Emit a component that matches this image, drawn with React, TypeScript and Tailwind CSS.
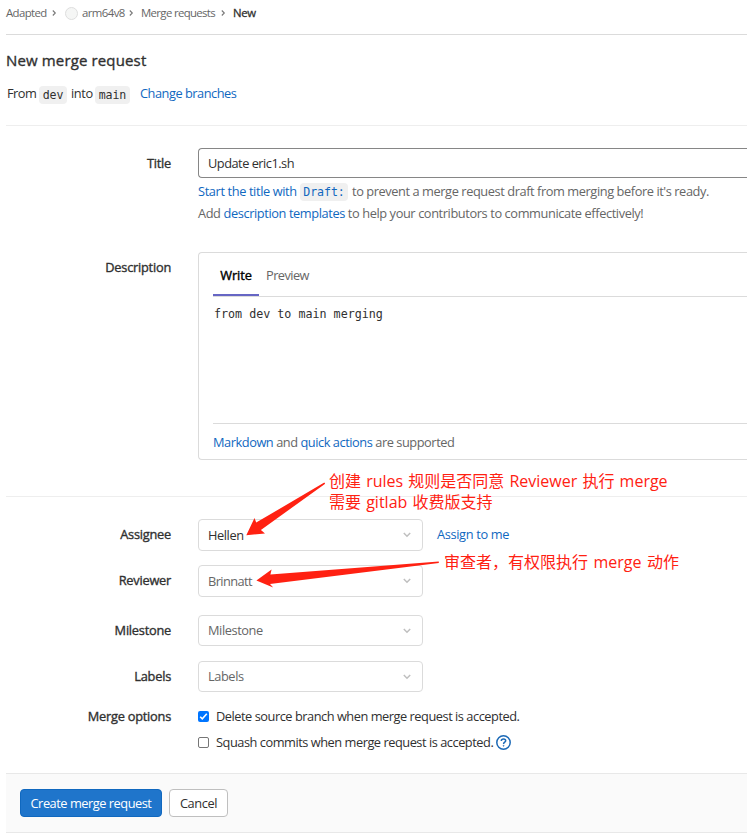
import React from "react";

const link = "text-[#1068bf]";

function Chevron() {
  return (
    <svg width="8" height="6" viewBox="0 0 8 6" fill="none" className="mr-[11px] shrink-0">
      <path d="M0.8 1L4 4.2L7.2 1" stroke="#bfbfbf" strokeWidth="1.5" />
    </svg>
  );
}

function Crumb() {
  return (
    <svg width="5" height="8" viewBox="0 0 5 8" fill="none" className="shrink-0">
      <path d="M0.8 1.5L3.3 4L0.8 6.5" stroke="#777" strokeWidth="1.1" />
    </svg>
  );
}

function Code({ children, className = "" }: { children: React.ReactNode; className?: string }) {
  return (
    <code
      className={`flex h-[18px] shrink-0 items-center justify-center rounded-[4px] bg-[#f0f0f0] font-['DejaVu_Sans_Mono',monospace] text-[11.6px] tracking-[-0.1px] ${className}`}
    >
      {children}
    </code>
  );
}

function Label({ children, className = "" }: { children: React.ReactNode; className?: string }) {
  return (
    <div
      className={`w-[171px] shrink-0 text-right tracking-[-0.24px] [-webkit-text-stroke:0.35px_#303030] ${className}`}
    >
      {children}
    </div>
  );
}

function Select({ children, className = "" }: { children: React.ReactNode; className?: string }) {
  return (
    <div
      className={`ml-[27px] flex w-[225px] shrink-0 items-center justify-between rounded-[4px] border border-[#dbdbdb] bg-white pl-[9px] ${className}`}
    >
      <span className="-mt-px">{children}</span>
      <Chevron />
    </div>
  );
}

export default function App() {
  return (
    <div className="relative h-[837px] w-[747px] overflow-hidden bg-white font-['Open_Sans','Noto_Sans_CJK_SC',sans-serif] text-[12.8px] leading-[20px] tracking-[-0.42px] whitespace-nowrap text-[#303030]">
      <nav className="ml-[6px] flex h-[35px] items-start border-b border-[#dbdbdb] pt-[3px] text-[11.4px] tracking-[-0.58px] text-[#666]">
        <div className="flex h-[20px] items-center">
          <span className="w-[46px] tracking-[-0.6px]">Adapted</span>
          <Crumb />
          <span className="ml-[8px] h-[13px] w-[13px] rounded-full border border-[#dedede] bg-[#f5f6f5]" />
          <span className="ml-[4px] w-[47px]">arm64v8</span>
          <Crumb />
          <span className="ml-[7px] w-[80px] tracking-[-0.65px]">Merge requests</span>
          <Crumb />
          <span className="ml-[7px] tracking-[-0.3px] text-[#303030] [-webkit-text-stroke:0.3px_#303030]">New</span>
        </div>
      </nav>

      <header className="ml-[6px] h-[91px] border-b border-[#eee] pt-[13px]">
        <h1 className="h-[24px] text-[15px] leading-[24px] tracking-[0.14px] [-webkit-text-stroke:0.35px_#303030]">
          New merge request
        </h1>
        <div className="mt-[11px] flex h-[20px] items-center">
          <span className="w-[33px] pl-px tracking-[-0.5px]">From</span>
          <Code className="mt-[4px] w-[28px]">dev</Code>
          <span className="ml-[4px] w-[24px] tracking-[-0.4px]">into</span>
          <Code className="mt-[4px] w-[35px]">main</Code>
          <a className={`ml-[10px] tracking-[-0.48px] ${link}`}>Change branches</a>
        </div>
      </header>

      <section className="mt-[22px] flex">
        <div className="flex h-[30px] items-center">
          <Label>Title</Label>
        </div>
        <div className="ml-[27px] grow">
          <div className="flex h-[30px] items-center rounded-l-[4px] border border-r-0 border-[#868686] pl-[9px] tracking-[-0.5px]">
            Update eric1.sh
          </div>
          <p className="mt-[2px] flex h-[22px] items-center text-[#666]">
            <span className={`w-[102px] tracking-[-0.38px] ${link}`}>Start the title with</span>
            <Code className={`mt-[2px] w-[48px] ${link}`}>Draft:</Code>
            <span className="ml-[4px]">to prevent a merge request draft from merging before it's ready.</span>
          </p>
          <p className="flex h-[22px] items-center tracking-[-0.4px] text-[#666]">
            <span>
              Add <a className={link}>description templates</a> to help your contributors to communicate effectively!
            </span>
          </p>
        </div>
      </section>

      <section className="mt-[28px] flex">
        <div className="flex h-[30px] items-center">
          <Label>Description</Label>
        </div>
        <div className="ml-[27px] h-[208px] grow rounded-l-[4px] border border-r-0 border-[#dbdbdb] pl-[14px]">
          <div className="flex h-[44px] border-b border-[#dbdbdb]">
            <div className="flex h-[43px] w-[46px] items-center justify-center border-b-2 border-[#6666c4] pt-[3px] tracking-[-0.1px] text-black [-webkit-text-stroke:0.4px_#000]">
              Write
            </div>
            <div className="ml-[7px] flex h-[43px] items-center pt-px tracking-[-0.55px] text-[#666]">Preview</div>
          </div>
          <div className="h-[127px] border-b border-[#dbdbdb] pt-[7px] pl-[1px] font-['DejaVu_Sans_Mono',monospace] text-[11.7px] tracking-normal">
            from dev to main merging
          </div>
          <p className="flex h-[36px] items-center tracking-[-0.45px] text-[#666]">
            <span>
              <a className={link}>Markdown</a> and <a className={link}>quick actions</a> are supported
            </span>
          </p>
        </div>
      </section>

      <section className="mt-[36px] ml-[6px] border-t border-[#eee] pt-[22px]">
        <div className="-ml-[6px] flex items-center">
          <Label className="-mt-[2px]">Assignee</Label>
          <Select className="h-[32px]">Hellen</Select>
          <a className={`-mt-[2px] ml-[14px] tracking-[-0.35px] ${link}`}>Assign to me</a>
        </div>
        <div className="mt-[14px] -ml-[6px] flex items-center">
          <Label className="-mt-[2px]">Reviewer</Label>
          <Select className="h-[32px] text-[#666]">
            <span className="tracking-[-0.6px]">Brinnatt</span>
          </Select>
        </div>
        <div className="mt-[18px] -ml-[6px] flex items-center">
          <Label className="-mt-px">Milestone</Label>
          <Select className="h-[31px] text-[#666]">Milestone</Select>
        </div>
        <div className="mt-[15px] -ml-[6px] flex items-center">
          <Label className="-mt-px">Labels</Label>
          <Select className="h-[31px] text-[#666]">Labels</Select>
        </div>
        <div className="mt-[14px] -ml-[6px] flex h-[20px] items-center">
          <Label>Merge options</Label>
          <span className="ml-[27px] flex h-[11px] w-[11px] items-center justify-center rounded-[2px] bg-[#0075ff]">
            <svg width="9" height="9" viewBox="0 0 9 9" fill="none">
              <path d="M1.2 4.7L3.3 6.8L7.8 1.8" stroke="#fff" strokeWidth="1.6" />
            </svg>
          </span>
          <span className="ml-[7px] tracking-[-0.47px]">Delete source branch when merge request is accepted.</span>
        </div>
        <div className="mt-[6px] -ml-[6px] flex h-[20px] items-center pl-[198px]">
          <span className="h-[11px] w-[11px] rounded-[2px] border border-[#767676]" />
          <span className="ml-[7px] w-[280px] tracking-[-0.47px]">Squash commits when merge request is accepted.</span>
          <svg width="15" height="15" viewBox="0 0 15 15" fill="none" stroke="#1b69b6">
            <circle cx="7.5" cy="7.5" r="6.7" strokeWidth="1.5" />
            <path d="M5.3 6C5.3 4.6 6.3 3.9 7.5 3.9C8.8 3.9 9.7 4.7 9.7 5.8C9.7 7.2 7.6 7.2 7.6 8.9" strokeWidth="1.5" />
            <circle cx="7.6" cy="10.8" r="0.45" strokeWidth="0.9" />
          </svg>
        </div>
      </section>

      <footer className="mt-[21px] ml-[6px] flex h-[60px] items-start border-y border-[#e8e8e8] bg-[#fafafa] pt-[15px] pl-[14px]">
        <button className="h-[28px] w-[142px] rounded-[4px] border border-[#1068bf] bg-[#1f75cb] tracking-[-0.47px] text-white">
          Create merge request
        </button>
        <button className="ml-[7px] h-[28px] w-[59px] rounded-[4px] border border-[#bfbfbf] bg-white">Cancel</button>
      </footer>

      <div className="absolute top-[471px] left-[329px] text-[16px] leading-[21px] tracking-normal text-[#ff2112] [word-spacing:1px]">
        <p>创建 rules 规则是否同意 Reviewer 执行 merge</p>
        <p>需要 gitlab 收费版支持</p>
      </div>
      <div className="absolute top-[552px] left-[444px] text-[16px] leading-[21px] tracking-normal text-[#ff2112] [word-spacing:1.3px]">
        审查者，有权限执行 merge 动作
      </div>
      <svg className="absolute top-0 left-0" width="747" height="837" viewBox="0 0 747 837" fill="#ff2112">
        <path d="M246.3 535.2L254.5 518L256.2 522.6L324.3 482.5L325.2 483.8L260.9 529.9L265 533.4Z" />
        <path d="M256.4 580.6L271.6 569.4L270.4 574.6L438.8 561.6L438.8 563L270 584L273.2 587.6Z" />
      </svg>
    </div>
  );
}
